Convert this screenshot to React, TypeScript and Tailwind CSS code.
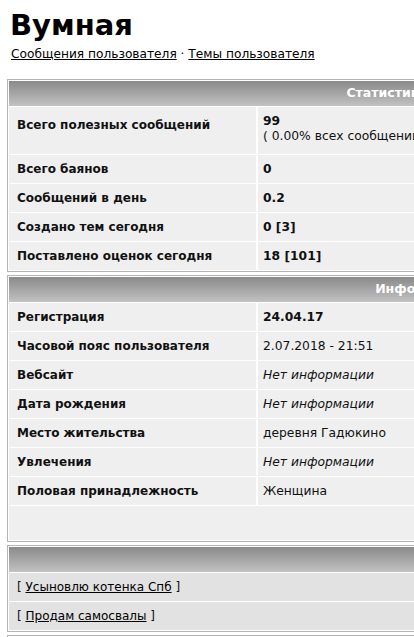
const font = { fontFamily: '"DejaVu Sans", Verdana, sans-serif' };

type Row = { label: string; value: React.ReactNode };

const stats: Row[] = [
  {
    label: "Всего полезных сообщений",
    value: (
      <div>
        <div className="font-bold leading-[15px]">99</div>
        <div className="leading-[14px]">( 0.00% всех сообщений )</div>
      </div>
    ),
  },
  { label: "Всего баянов", value: <b>0</b> },
  { label: "Сообщений в день", value: <b>0.2</b> },
  { label: "Создано тем сегодня", value: <b>0 [3]</b> },
  { label: "Поставлено оценок сегодня", value: <b>18 [101]</b> },
];

const none = <i>Нет информации</i>;

const info: Row[] = [
  { label: "Регистрация", value: <b>24.04.17</b> },
  { label: "Часовой пояс пользователя", value: "2.07.2018 - 21:51" },
  { label: "Вебсайт", value: none },
  { label: "Дата рождения", value: none },
  { label: "Место жительства", value: "деревня Гадюкино" },
  { label: "Увлечения", value: none },
  { label: "Половая принадлежность", value: "Женщина" },
];

function Header({ title }: { title?: string }) {
  return (
    <div className="h-[25px] bg-gradient-to-b from-[#8a8a8a] to-[#c2c2c2] flex items-center justify-center text-white font-bold text-[12.5px]">
      {title}
    </div>
  );
}

function InfoRow({ row, tall }: { row: Row; tall?: boolean }) {
  return (
    <div className={`flex gap-[2px] ${tall ? "h-[47px]" : "h-[28px]"}`}>
      <div
        className={`w-[247px] shrink-0 bg-[#efefef] pl-[8px] font-bold text-[12px] flex ${
          tall ? "items-start pt-[9px]" : "items-center"
        }`}
      >
        {row.label}
      </div>
      <div
        className={`flex-1 bg-[#efefef] pl-[5px] text-[12.3px] flex ${
          tall ? "items-start pt-[7px]" : "items-center"
        }`}
      >
        {row.value}
      </div>
    </div>
  );
}

export default function App() {
  return (
    <div className="w-[414px] h-[637px] overflow-hidden bg-white text-[#111]" style={font}>
      <div className="pl-[10px] pt-[8px]">
        <h1 className="text-[29px] font-bold leading-[34px] text-black">Вумная</h1>
        <div className="text-[12.2px] leading-[16px] pl-px pt-[4px]">
          <a className="underline text-black">Сообщения пользователя</a>
          <span> · </span>
          <a className="underline text-black">Темы пользователя</a>
        </div>
      </div>

      <div className="pl-[7px] pt-[17px] flex flex-col gap-[3px]">
        <div className="w-[760px] border border-[#b4b4b4] bg-white p-px flex flex-col gap-px">
          <Header title="Статистика" />
          {stats.map((r, i) => (
            <InfoRow key={r.label} row={r} tall={i === 0} />
          ))}
        </div>

        <div className="w-[830px] border border-[#b4b4b4] bg-white p-px flex flex-col gap-px">
          <Header title="Информация" />
          {info.map((r) => (
            <InfoRow key={r.label} row={r} />
          ))}
          <div className="h-[34px] bg-[#efefef]" />
        </div>

        <div className="w-[760px] border border-[#b4b4b4] bg-white p-px flex flex-col gap-px">
          <Header />
          {["Усыновлю котенка Спб", "Продам самосвалы"].map((t) => (
            <div key={t} className="h-[28px] bg-[#e2e2e2] pl-[8px] flex items-center text-[12px]">
              [&nbsp;<a className="underline text-black">{t}</a>&nbsp;]
            </div>
          ))}
        </div>

        <div className="w-[760px] h-[20px] border border-[#b4b4b4] bg-white" />
      </div>
    </div>
  );
}
